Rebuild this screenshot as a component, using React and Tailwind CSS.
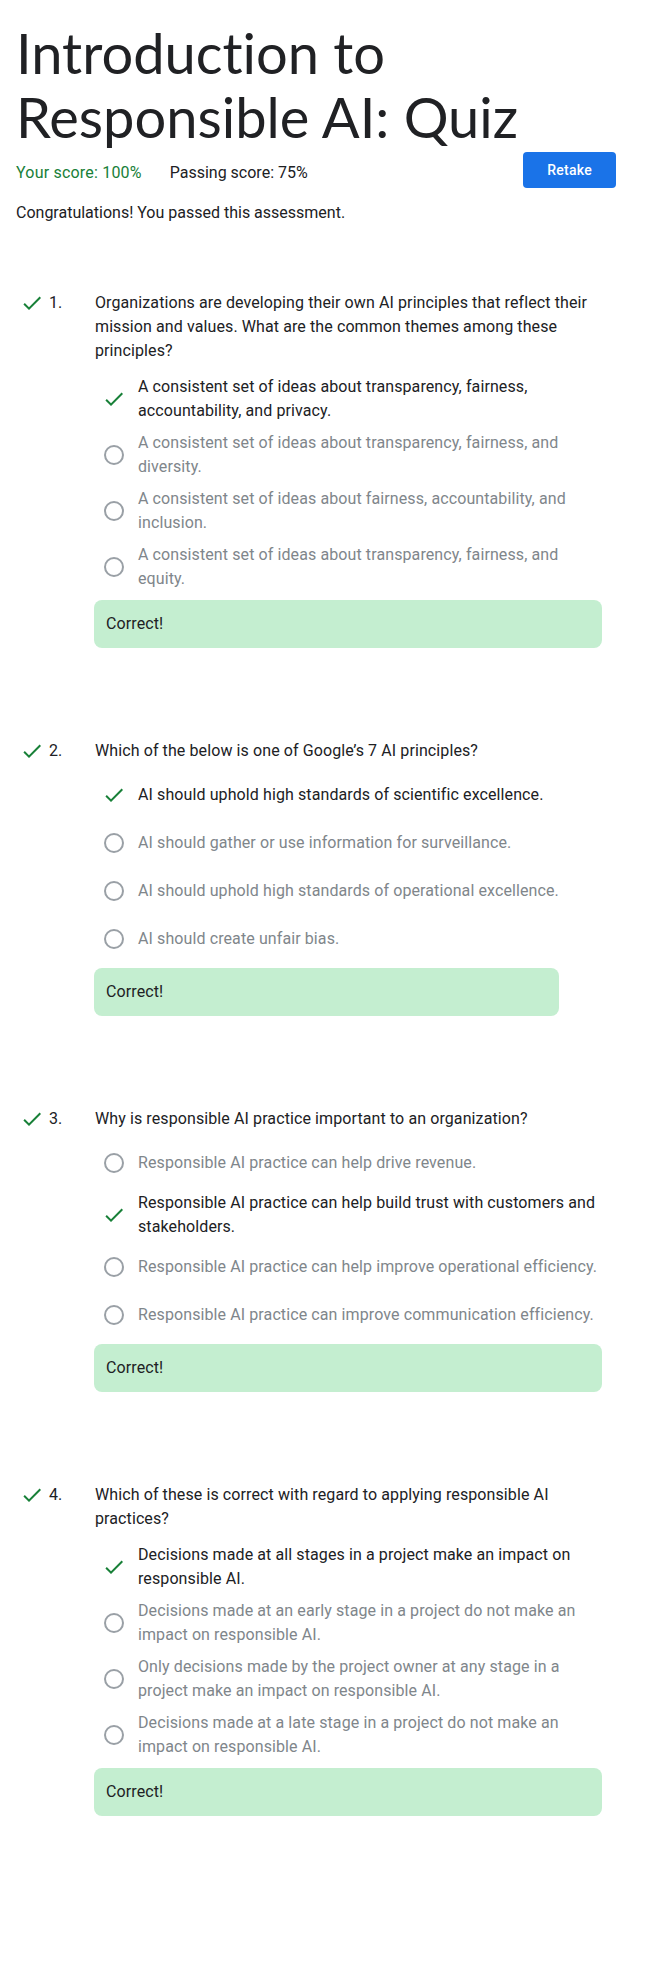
import React from "react";

const questions = [
  {
    num: 1,
    text: "Organizations are developing their own AI principles that reflect their mission and values. What are the common themes among these principles?",
    options: [
      "A consistent set of ideas about transparency, fairness, accountability, and privacy.",
      "A consistent set of ideas about transparency, fairness, and diversity.",
      "A consistent set of ideas about fairness, accountability, and inclusion.",
      "A consistent set of ideas about transparency, fairness, and equity.",
    ],
    answer: 0,
  },
  {
    num: 2,
    text: "Which of the below is one of Google\u2019s 7 AI principles?",
    options: [
      "AI should uphold high standards of scientific excellence.",
      "AI should gather or use information for surveillance.",
      "AI should uphold high standards of operational excellence.",
      "AI should create unfair bias.",
    ],
    answer: 0,
  },
  {
    num: 3,
    text: "Why is responsible AI practice important to an organization?",
    options: [
      "Responsible AI practice can help drive revenue.",
      "Responsible AI practice can help build trust with customers and stakeholders.",
      "Responsible AI practice can help improve operational efficiency.",
      "Responsible AI practice can improve communication efficiency.",
    ],
    answer: 1,
  },
  {
    num: 4,
    text: "Which of these is correct with regard to applying responsible AI practices?",
    options: [
      "Decisions made at all stages in a project make an impact on responsible AI.",
      "Decisions made at an early stage in a project do not make an impact on responsible AI.",
      "Only decisions made by the project owner at any stage in a project make an impact on responsible AI.",
      "Decisions made at a late stage in a project do not make an impact on responsible AI.",
    ],
    answer: 0,
  },
];

function Check() {
  return (
    <svg viewBox="0 0 24 24" className="w-6 h-6 shrink-0" fill="#188038">
      <path d="M9 16.17L4.83 12l-1.42 1.41L9 19 21 7l-1.41-1.41z" />
    </svg>
  );
}

function Question({ q }) {
  return (
    <div className="flex items-start">
      <div className="w-[78px] shrink-0 flex items-center h-6 pl-1">
        <Check />
        <span className="ml-[5px]">{q.num}.</span>
      </div>
      <div className="flex flex-col w-fit max-w-[508px] tracking-[0.1px]">
        <p className="leading-6 ml-[1px]">{q.text}</p>
        <div className="mt-2 flex flex-col">
          {q.options.map((opt, i) => {
            const right = i === q.answer;
            return (
              <div key={i} className="flex items-center min-h-12 py-1 pl-2 gap-3">
                <div className="w-6 h-6 shrink-0 flex items-center justify-center">
                  {right ? (
                    <Check />
                  ) : (
                    <div className="w-5 h-5 rounded-full border-2 border-[#9aa0a6]" />
                  )}
                </div>
                <span className={right ? "leading-6 text-[#202124]" : "leading-6 text-[#80868b]"}>
                  {opt}
                </span>
              </div>
            );
          })}
        </div>
        <div className="mt-[5px] h-12 rounded-lg bg-[#c4eed0] px-3 flex items-center">
          Correct!
        </div>
      </div>
    </div>
  );
}

export default function App() {
  return (
    <div className="min-h-screen bg-white text-[#202124] font-['Roboto',sans-serif] text-base pl-4 pt-[21px] pb-[150px]">
      <div className="w-[600px]">
        <h1 className="font-['Lato',sans-serif] text-[56px] leading-[64px] font-normal [font-variant-ligatures:none]">
          Introduction to Responsible AI: Quiz
        </h1>
        <div className="mt-[3px] flex justify-between items-start">
          <div className="flex gap-7 pt-[9px] leading-6">
            <span className="text-[#188038] tracking-[0.2px]">Your score: 100%</span>
            <span>Passing score: 75%</span>
          </div>
          <button className="h-9 px-6 rounded bg-[#1a73e8] text-white text-sm font-medium tracking-[0.25px]">
            Retake
          </button>
        </div>
      </div>

      <p className="mt-[13px] leading-6">Congratulations! You passed this assessment.</p>

      <div className="mt-[66px] flex flex-col gap-[91px]">
        {questions.map((q) => (
          <Question key={q.num} q={q} />
        ))}
      </div>
    </div>
  );
}
